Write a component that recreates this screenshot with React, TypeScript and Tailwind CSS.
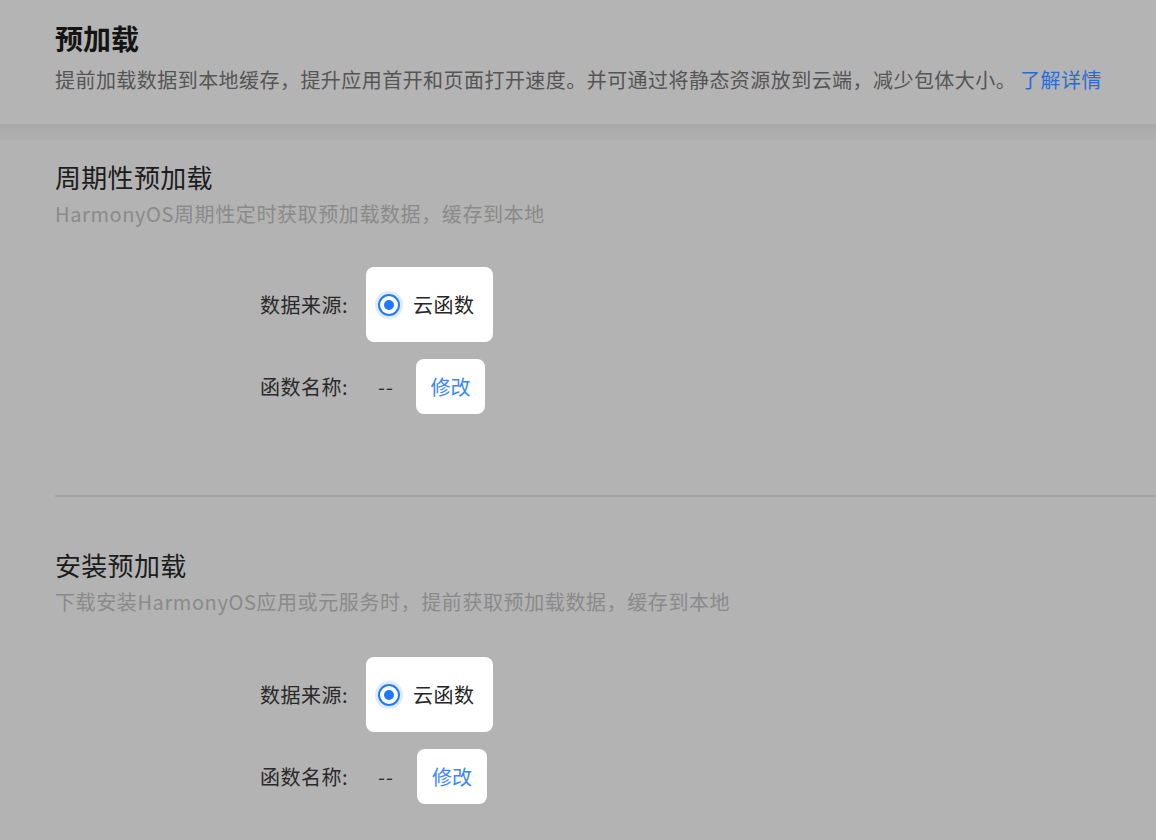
import React from "react";

const font = { fontFamily: '"Noto Sans CJK SC", "Noto Sans", sans-serif' };

type SectionProps = {
  title: string;
  desc: string;
  firstRowGap: string;
  editBoxClass: string;
};

function Radio() {
  return (
    <span className="flex h-[22px] w-[22px] items-center justify-center rounded-full border-2 border-[#1f78ff] shadow-[0_0_0_3px_rgba(31,120,255,0.15)]">
      <span className="h-[10px] w-[10px] rounded-full bg-[#1f78ff]" />
    </span>
  );
}

function PreloadSection({ title, desc, firstRowGap, editBoxClass }: SectionProps) {
  return (
    <div className="pl-[55px]">
      <h2 className="text-[26px] font-normal leading-[34px] tracking-[0.3px] text-[#1c1c1c]">{title}</h2>
      <p className="mt-[6px] text-[20px] leading-[28px] tracking-[0.6px] text-[#8a8a8a]">{desc}</p>

      <div className={`flex items-center ${firstRowGap}`}>
        <span className="w-[293px] text-right text-[20px] tracking-[0.5px] text-[#2a2a2a]">数据来源:</span>
        <div className="ml-[18px] flex h-[75px] w-[127px] items-center gap-[13px] rounded-lg bg-white pl-[12px]">
          <Radio />
          <span className="text-[20px] tracking-[0.5px] text-[#262626]">云函数</span>
        </div>
      </div>

      <div className="mt-[17px] flex items-center">
        <span className="w-[293px] text-right text-[20px] tracking-[0.5px] text-[#2a2a2a]">函数名称:</span>
        <span className="ml-[30px] text-[20px] tracking-[1px] text-[#2f2f2f]">--</span>
        <div
          className={`flex h-[55px] items-center justify-center rounded-lg bg-white text-[20px] text-[#3a86ff] ${editBoxClass}`}
        >
          修改
        </div>
      </div>
    </div>
  );
}

export default function App() {
  return (
    <div className="min-h-[840px] w-full overflow-hidden bg-[#b3b3b3]" style={font}>
      <div className="h-[124px] bg-[#b4b4b4] px-[55px] pt-[20px]">
        <h1 className="text-[28px] font-bold leading-[36px] text-[#141414]">预加载</h1>
        <p className="mt-[10px] whitespace-nowrap text-[20px] leading-[28px] tracking-[0.45px] text-[#555555]">
          提前加载数据到本地缓存，提升应用首开和页面打开速度。并可通过将静态资源放到云端，减少包体大小。
          <span className="ml-[4px] text-[#2b6bd2]">了解详情</span>
        </p>
      </div>
      <div className="h-[16px] bg-gradient-to-b from-[#aaaaaa] to-[#b0b0b0]" />

      <div className="pt-[20px]">
        <PreloadSection
          title="周期性预加载"
          desc="HarmonyOS周期性定时获取预加载数据，缓存到本地"
          firstRowGap="mt-[39px]"
          editBoxClass="ml-[22px] w-[69px]"
        />
        <div className="ml-[55px] mt-[81px] h-[2px] bg-[#a6a6a6]" />
        <div className="pt-[51px]">
          <PreloadSection
            title="安装预加载"
            desc="下载安装HarmonyOS应用或元服务时，提前获取预加载数据，缓存到本地"
            firstRowGap="mt-[41px]"
            editBoxClass="ml-[23px] w-[70px]"
          />
        </div>
      </div>
    </div>
  );
}
